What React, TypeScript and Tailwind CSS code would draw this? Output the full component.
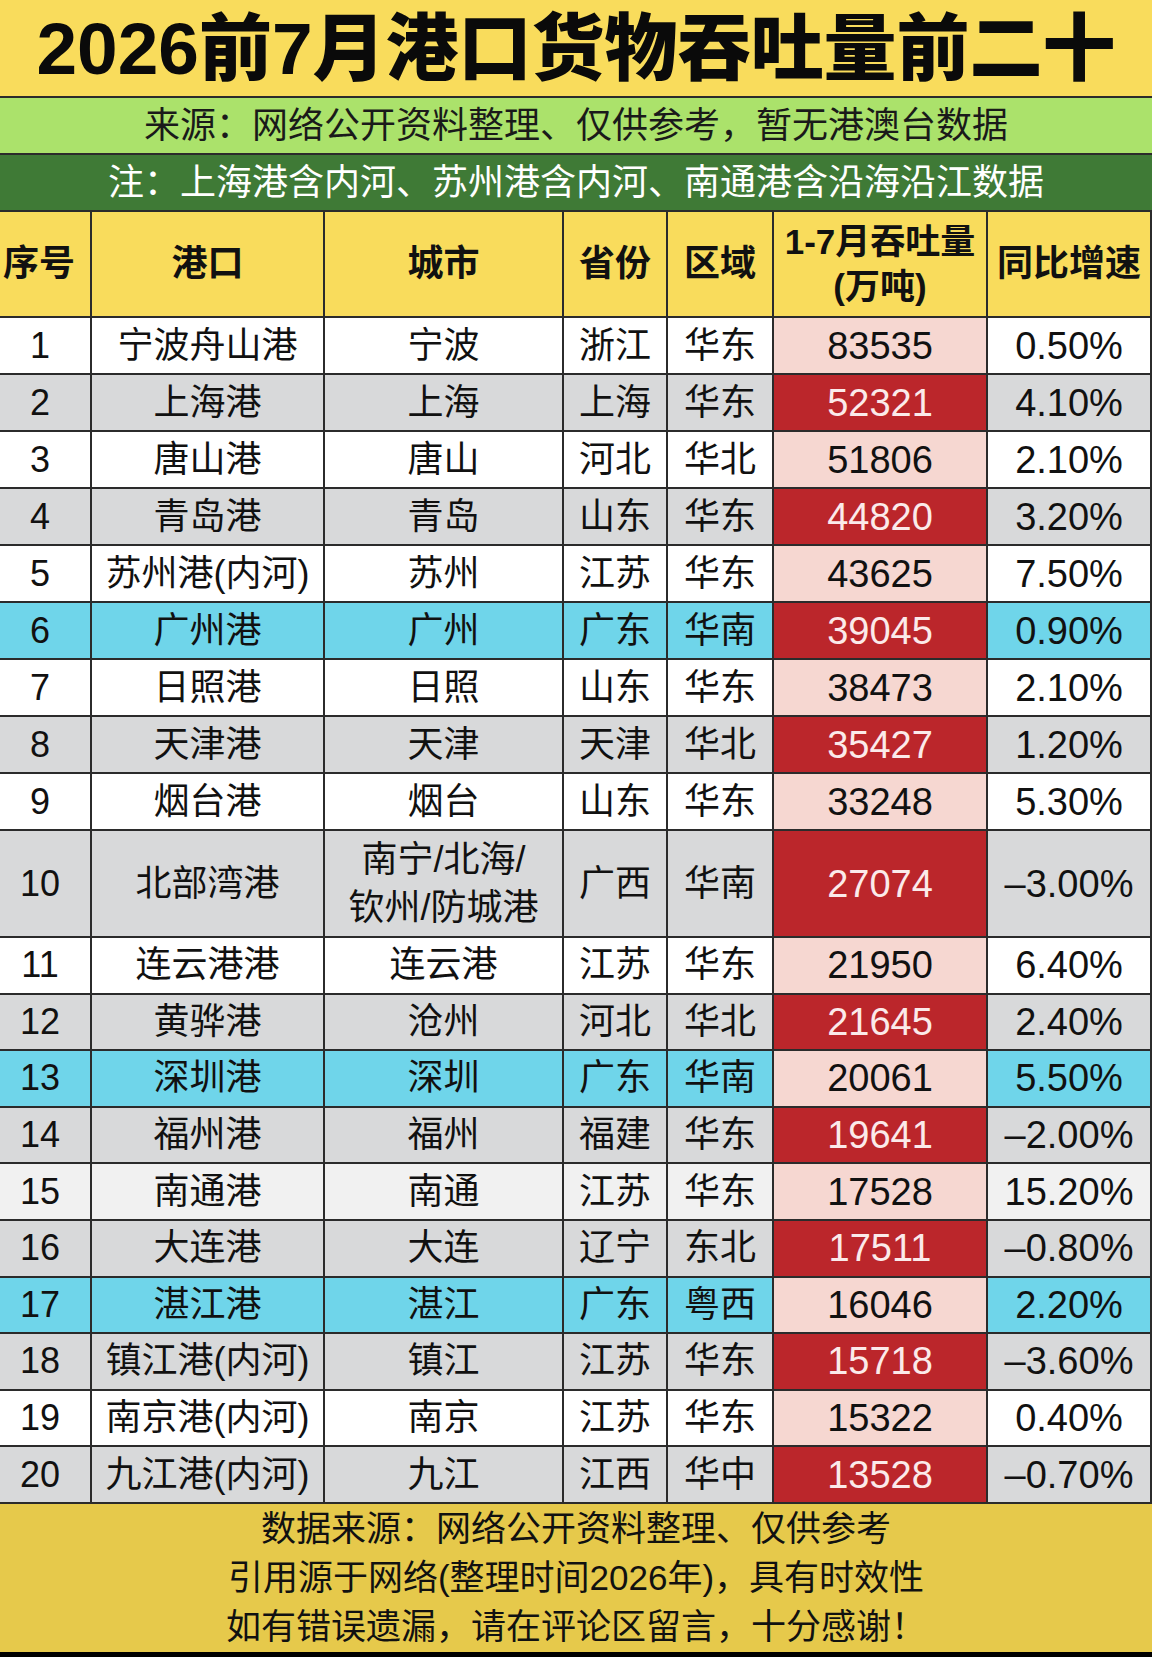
import React from "react";

type Row = {
  no: number;
  port: string;
  city: string[];
  province: string;
  region: string;
  volume: string;
  growth: string;
};

const rows: Row[] = [
  { no: 1, port: "宁波舟山港", city: ["宁波"], province: "浙江", region: "华东", volume: "83535", growth: "0.50%" },
  { no: 2, port: "上海港", city: ["上海"], province: "上海", region: "华东", volume: "52321", growth: "4.10%" },
  { no: 3, port: "唐山港", city: ["唐山"], province: "河北", region: "华北", volume: "51806", growth: "2.10%" },
  { no: 4, port: "青岛港", city: ["青岛"], province: "山东", region: "华东", volume: "44820", growth: "3.20%" },
  { no: 5, port: "苏州港(内河)", city: ["苏州"], province: "江苏", region: "华东", volume: "43625", growth: "7.50%" },
  { no: 6, port: "广州港", city: ["广州"], province: "广东", region: "华南", volume: "39045", growth: "0.90%" },
  { no: 7, port: "日照港", city: ["日照"], province: "山东", region: "华东", volume: "38473", growth: "2.10%" },
  { no: 8, port: "天津港", city: ["天津"], province: "天津", region: "华北", volume: "35427", growth: "1.20%" },
  { no: 9, port: "烟台港", city: ["烟台"], province: "山东", region: "华东", volume: "33248", growth: "5.30%" },
  { no: 10, port: "北部湾港", city: ["南宁/北海/", "钦州/防城港"], province: "广西", region: "华南", volume: "27074", growth: "–3.00%" },
  { no: 11, port: "连云港港", city: ["连云港"], province: "江苏", region: "华东", volume: "21950", growth: "6.40%" },
  { no: 12, port: "黄骅港", city: ["沧州"], province: "河北", region: "华北", volume: "21645", growth: "2.40%" },
  { no: 13, port: "深圳港", city: ["深圳"], province: "广东", region: "华南", volume: "20061", growth: "5.50%" },
  { no: 14, port: "福州港", city: ["福州"], province: "福建", region: "华东", volume: "19641", growth: "–2.00%" },
  { no: 15, port: "南通港", city: ["南通"], province: "江苏", region: "华东", volume: "17528", growth: "15.20%" },
  { no: 16, port: "大连港", city: ["大连"], province: "辽宁", region: "东北", volume: "17511", growth: "–0.80%" },
  { no: 17, port: "湛江港", city: ["湛江"], province: "广东", region: "粤西", volume: "16046", growth: "2.20%" },
  { no: 18, port: "镇江港(内河)", city: ["镇江"], province: "江苏", region: "华东", volume: "15718", growth: "–3.60%" },
  { no: 19, port: "南京港(内河)", city: ["南京"], province: "江苏", region: "华东", volume: "15322", growth: "0.40%" },
  { no: 20, port: "九江港(内河)", city: ["九江"], province: "江西", region: "华中", volume: "13528", growth: "–0.70%" },
];

const highlighted = [6, 13, 17];

// every table cell: centred, dark grid lines on right and bottom
const cell = "flex items-center justify-center leading-none border-b-2 border-r-2 border-[#2b2b2b]";

function rowBg(no: number) {
  if (highlighted.includes(no)) return "bg-[#6fd5ea]";
  if (no === 15) return "bg-[#f1f1f1]";
  return no % 2 === 0 ? "bg-[#d8d9da]" : "bg-white";
}

function rowHeight(no: number) {
  if (no === 10) return "h-[107px]";
  return no < 10 ? "h-[57px]" : "h-[56.6px]";
}

export default function App() {
  return (
    <div className="w-[1152px] h-[1657px] flex flex-col bg-black font-['Liberation_Sans','Noto_Sans_CJK_SC',sans-serif] text-[#111]">
      {/* Title */}
      <div className="h-[98px] shrink-0 flex items-center justify-center bg-[#f9dc5c] border-b-2 border-[#2b2b2b]">
        <h1 className="text-[73px] leading-none font-black text-[#0a0a0a]">
          2026前7月港口货物吞吐量前二十
        </h1>
      </div>
      <div className="h-[57px] shrink-0 flex items-center justify-center bg-[#abe26b] border-b-2 border-[#2b2b2b] text-[36px] leading-none text-[#1a1a1a]">
        来源：网络公开资料整理、仅供参考，暂无港澳台数据
      </div>
      <div className="h-[57px] shrink-0 flex items-center justify-center bg-[#3f7a36] border-b-2 border-[#2b2b2b] text-[36px] leading-none text-white">
        注：上海港含内河、苏州港含内河、南通港含沿海沿江数据
      </div>

      {/* Table */}
      <div className="shrink-0 grid grid-cols-[92px_233px_239px_104px_106px_214px_164px]">
        <div className={`${cell} h-[106px] pr-[12px] bg-[#f9dc5c] text-[36px] font-bold`}>序号</div>
        <div className={`${cell} bg-[#f9dc5c] text-[36px] font-bold`}>港口</div>
        <div className={`${cell} bg-[#f9dc5c] text-[36px] font-bold`}>城市</div>
        <div className={`${cell} bg-[#f9dc5c] text-[36px] font-bold`}>省份</div>
        <div className={`${cell} bg-[#f9dc5c] text-[36px] font-bold`}>区域</div>
        <div className={`${cell} flex-col gap-[10px] bg-[#f9dc5c] text-[35px] font-bold`}>
          <span>1-7月吞吐量</span>
          <span>(万吨)</span>
        </div>
        <div className={`${cell} border-r-0 bg-[#f9dc5c] text-[36px] font-bold`}>同比增速</div>

        {rows.map((r) => {
          const bg = rowBg(r.no);
          const red = r.no % 2 === 0;
          return (
            <React.Fragment key={r.no}>
              <div className={`${cell} ${bg} ${rowHeight(r.no)} pr-[10px] text-[36px]`}>{r.no}</div>
              <div className={`${cell} ${bg} text-[36px]`}>{r.port}</div>
              <div className={`${cell} ${bg} flex-col gap-[12px] text-[36px]`}>
                {r.city.map((c) => (
                  <span key={c}>{c}</span>
                ))}
              </div>
              <div className={`${cell} ${bg} text-[36px]`}>{r.province}</div>
              <div className={`${cell} ${bg} text-[36px]`}>{r.region}</div>
              <div
                className={`${cell} text-[38px] ${
                  red ? "bg-[#bb262b] text-[#fbeaea]" : "bg-[#f6d7d1] text-[#111]"
                }`}
              >
                {r.volume}
              </div>
              <div className={`${cell} border-r-0 ${bg} text-[38px]`}>{r.growth}</div>
            </React.Fragment>
          );
        })}
      </div>

      {/* Footer */}
      <div className="flex-1 flex flex-col items-center justify-center bg-[#e6c94b] text-[35px] leading-[49px] text-[#111]">
        <p>数据来源：网络公开资料整理、仅供参考</p>
        <p>引用源于网络(整理时间2026年)，具有时效性</p>
        <p>如有错误遗漏，请在评论区留言，十分感谢！</p>
      </div>
      <div className="h-[5px] shrink-0 bg-black" />
    </div>
  );
}
